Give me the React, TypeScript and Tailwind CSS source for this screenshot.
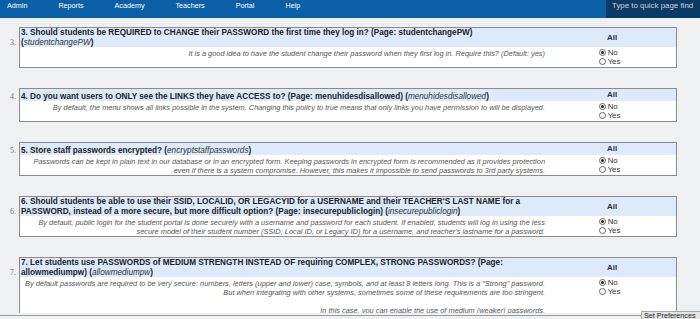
import React from "react";

type Item = {
  n: number;
  title: React.ReactNode;
  desc: React.ReactNode;
};

const Key = ({ children }: { children: string }) => (
  <>
    (<span className="italic font-normal text-[#333]">{children}</span>)
  </>
);

const items: Item[] = [
  {
    n: 3,
    title: (
      <>
        3. Should students be REQUIRED to CHANGE their PASSWORD the first time they log in? (Page: studentchangePW)
        <br />
        <Key>studentchangePW</Key>
      </>
    ),
    desc: (
      <>
        It is a good idea to have the student change their password when they first log in. Require this? (Default: yes)
      </>
    ),
  },
  {
    n: 4,
    title: (
      <>
        4. Do you want users to ONLY see the LINKS they have ACCESS to? (Page: menuhidesdisallowed){" "}
        <Key>menuhidesdisallowed</Key>
      </>
    ),
    desc: (
      <>
        By default, the menu shows all links possible in the system. Changing this policy to true means that only links you have permission to will be displayed.
      </>
    ),
  },
  {
    n: 5,
    title: (
      <>
        5. Store staff passwords encrypted? <Key>encryptstaffpasswords</Key>
      </>
    ),
    desc: (
      <>
        Passwords can be kept in plain text in our database or in an encrypted form. Keeping passwords in encrypted form is recommended as it provides protection
        <br />
        even if there is a system compromise. However, this makes it impossible to send passwords to 3rd party systems.
      </>
    ),
  },
  {
    n: 6,
    title: (
      <>
        6. Should students be able to use their SSID, LOCALID, OR LEGACYID for a USERNAME and their TEACHER'S LAST NAME for a
        <br />
        PASSWORD, instead of a more secure, but more difficult option? (Page: insecurepubliclogin) <Key>insecurepubliclogin</Key>
      </>
    ),
    desc: (
      <>
        By default, public login for the student portal is done securely with a username and password for each student. If enabled, students will log in using the less
        <br />
        secure model of their student number (SSID, Local ID, or Legacy ID) for a username, and teacher's lastname for a password.
      </>
    ),
  },
  {
    n: 7,
    title: (
      <>
        7. Let students use PASSWORDS of MEDIUM STRENGTH INSTEAD OF requiring COMPLEX, STRONG PASSWORDS? (Page:
        <br />
        allowmediumpw) <Key>allowmediumpw</Key>
      </>
    ),
    desc: (
      <>
        By default passwords are required to be very secure: numbers, letters (upper and lower) case, symbols, and at least 8 letters long. This is a "Strong" password.
        <br />
        But when integrating with other systems, sometimes some of these requirements are too stringent.
        <br />
        <br />
        In this case, you can enable the use of medium (weaker) passwords.
        <br />
        <br />
      </>
    ),
  },
];

function Radio({ checked, label }: { checked?: boolean; label: string }) {
  return (
    <label className="flex items-center gap-[2px] h-[9px] leading-[9px] text-[7.8px] text-[#333]">
      <span className="flex items-center justify-center w-[7px] h-[7px] rounded-full border border-[#666] bg-white">
        {checked && <span className="w-[3px] h-[3px] rounded-full bg-[#222]" />}
      </span>
      {label}
    </label>
  );
}

function Setting({ item }: { item: Item }) {
  return (
    <div className="w-[658px] shrink-0 border border-[#8c8c8c] bg-white">
      <div className="flex bg-[#dceafb]">
        <div className="flex-1 flex items-end pl-[1px] font-bold text-[8.2px] leading-[9.5px] text-[#222]">
          <span className="-ml-[14px] w-[14px] shrink-0 pl-[3px] font-['Liberation_Serif',serif] font-normal text-[8px] text-[#777]">
            {item.n}.
          </span>
          <div>{item.title}</div>
        </div>
        <div className="w-[128px] flex items-center justify-center font-bold text-[8px] text-[#333]">All</div>
      </div>
      <div className="flex">
        <div className="flex-1 text-right italic text-[#555] text-[7.4px] leading-[9px] pr-[3px] pl-[3px] pt-[1.5px]">
          {item.desc}
        </div>
        <div className="w-[128px] flex justify-center py-[1px]">
          <div className="flex flex-col -ml-[5px]">
            <Radio checked label="No" />
            <Radio label="Yes" />
          </div>
        </div>
      </div>
    </div>
  );
}

export default function App() {
  const nav = ["Admin", "Reports", "Academy", "Teachers", "Portal", "Help"];
  return (
    <div className="relative w-[700px] h-[319px] overflow-hidden flex flex-col bg-[#eef0f2] font-['Liberation_Sans',Arial,sans-serif]">
      <div className="h-[18px] shrink-0 flex bg-[#0b5fa6]">
        <div className="flex gap-[31px] pl-[7px] pt-[1px] text-white text-[7.2px] leading-[9px]">
          {nav.map((n) => (
            <span key={n}>{n}</span>
          ))}
        </div>
        <div className="ml-auto w-[94px] h-full bg-[#0a3a66] pl-[6px] pt-[1px] text-[7.9px] leading-[9px] text-[#c9d3de]">
          Type to quick page find
        </div>
      </div>

      <div className="flex-1 overflow-hidden pl-[19px] pt-[9px] flex flex-col gap-[20px]">
        {items.map((it) => (
          <Setting key={it.n} item={it} />
        ))}
      </div>

      <div className="h-[6px] shrink-0 bg-[#eef0f2]">
        <div className="mt-[2px] h-px bg-[#9a9a9a]" />
      </div>

      <button className="absolute right-0 bottom-0 w-[59px] h-[8px] bg-[#e4e4e4] border-t border-l border-[#a8a8a8] text-[7.2px] leading-[7px] text-[#222] text-left pl-[2px] whitespace-nowrap">
        Set Preferences
      </button>
    </div>
  );
}
